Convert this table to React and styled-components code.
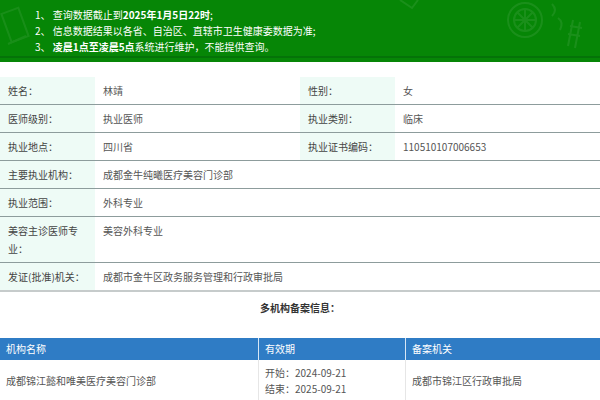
import React from "react";
import styled, { createGlobalStyle } from "styled-components";

const GlobalStyle = createGlobalStyle`
  html, body {
    margin: 0;
    padding: 0;
    background: #fff;
  }
  body {
    font-family: "Noto Sans CJK SC", "Noto Sans", sans-serif;
    font-size: 10px;
    color: #333;
  }
`;

const Page = styled.div`
  width: 600px;
  overflow: hidden;
`;

const Banner = styled.div`
  position: relative;
  height: 62px;
  background: #068606;
  box-sizing: border-box;
  padding: 7px 0 0 35px;
  overflow: hidden;
  &::after {
    content: "";
    position: absolute;
    left: 0;
    right: 0;
    top: 56px;
    height: 2px;
    background: #047308;
  }
`;

const Deco = styled.svg`
  position: absolute;
  top: 0;
  right: 0;
  opacity: 0.08;
`;

const DecoLeft = styled.svg`
  position: absolute;
  top: 0;
  left: 0;
  opacity: 0.07;
`;

const Notice = styled.div`
  position: relative;
  color: #fff;
  font-size: 10px;
  line-height: 16px;
  white-space: nowrap;
  b {
    font-weight: 700;
  }
`;

const InfoTable = styled.div`
  margin-top: 15px;
  display: grid;
  grid-template-columns: 95px 205px 95px 205px;
  border-bottom: 2px solid #c6cbcb;
`;

const Label = styled.div`
  background: #eefbf6;
  padding: 4.5px 8px;
  line-height: 18px;
  color: #444;
  border-bottom: 1px solid #8d9c9c;
  box-sizing: border-box;
  ${(p) => p.$last && "border-bottom: none;"}
`;

const Value = styled.div`
  padding: 4.5px 8px;
  line-height: 18px;
  color: #555;
  border-bottom: 1px solid #8d9c9c;
  grid-column: span ${(p) => p.$span || 1};
  ${(p) => p.$last && "border-bottom: none;"}
`;

const Heading = styled.div`
  text-align: center;
  font-weight: 700;
  color: #333;
  line-height: 18px;
  padding: 7px 0 21px;
`;

const OrgTable = styled.div`
  display: grid;
  grid-template-columns: 258px 147px 195px;
`;

const HeadCell = styled.div`
  background: #2f7cc5;
  color: #fff;
  height: 22px;
  line-height: 22px;
  padding: 0 6px;
  border-left: ${(p) => (p.$first ? "none" : "1px solid #d7e6f5")};
`;

const Cell = styled.div`
  display: flex;
  flex-direction: column;
  justify-content: center;
  padding: 5px 6px;
  line-height: 16px;
  color: #555;
  min-height: 32px;
  border-left: ${(p) => (p.$first ? "none" : "1px solid #e6e6e6")};
`;

const rows = [
  [["姓名：", "林靖"], ["性别：", "女"]],
  [["医师级别：", "执业医师"], ["执业类别：", "临床"]],
  [["执业地点：", "四川省"], ["执业证书编码：", "110510107006653"]],
];

const wideRows = [
  ["主要执业机构：", "成都金牛纯曦医疗美容门诊部"],
  ["执业范围：", "外科专业"],
  ["美容主诊医师专业：", "美容外科专业"],
  ["发证(批准)机关：", "成都市金牛区政务服务管理和行政审批局"],
];

export default function App() {
  return (
    <Page>
      <GlobalStyle />
      <Banner>
        <DecoLeft width="60" height="62" viewBox="0 0 60 62">
          <g fill="none" stroke="#fff" strokeWidth="2">
            <rect x="6" y="10" width="18" height="30" transform="rotate(-20 15 25)" />
            <path d="M8 44 L26 36" />
          </g>
        </DecoLeft>
        <Deco width="300" height="62" viewBox="0 0 300 62">
          <g fill="none" stroke="#fff" strokeWidth="2">
            <circle cx="225" cy="20" r="17" />
            <circle cx="225" cy="20" r="11" />
            <path d="M225 9 L225 31 M214 20 L236 20 M217 12 L233 28 M233 12 L217 28" />
            <path d="M273 20 L268 46 M280 22 L275 48 M270 26 L282 28 M268 34 L280 36" />
            <path d="M100 0 L112 8 L118 0" />
            <path d="M252 4 q6 6 0 12 M258 18 q6 4 2 12" />
          </g>
        </Deco>
        <Notice>1、 查询数据截止到<b>2025年1月5日22时</b>;</Notice>
        <Notice>2、 信息数据结果以各省、自治区、直辖市卫生健康委数据为准;</Notice>
        <Notice>3、 <b>凌晨1点至凌晨5点</b>系统进行维护，不能提供查询。</Notice>
      </Banner>

      <InfoTable>
        {rows.map((r, i) => (
          <React.Fragment key={i}>
            <Label>{r[0][0]}</Label>
            <Value>{r[0][1]}</Value>
            <Label>{r[1][0]}</Label>
            <Value>{r[1][1]}</Value>
          </React.Fragment>
        ))}
        {wideRows.map((r, i) => {
          const last = i === wideRows.length - 1;
          return (
            <React.Fragment key={r[0]}>
              <Label $last={last}>{r[0]}</Label>
              <Value $span={3} $last={last}>
                {r[1]}
              </Value>
            </React.Fragment>
          );
        })}
      </InfoTable>

      <Heading>多机构备案信息：</Heading>

      <OrgTable>
        <HeadCell $first>机构名称</HeadCell>
        <HeadCell>有效期</HeadCell>
        <HeadCell>备案机关</HeadCell>
        <Cell $first>成都锦江懿和唯美医疗美容门诊部</Cell>
        <Cell>
          <span>开始：2024-09-21</span>
          <span>结束：2025-09-21</span>
        </Cell>
        <Cell>成都市锦江区行政审批局</Cell>
      </OrgTable>
    </Page>
  );
}
